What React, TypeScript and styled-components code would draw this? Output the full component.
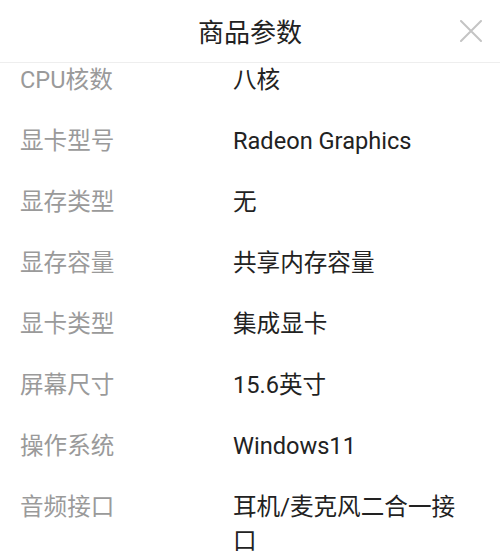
import React from "react";
import styled, { createGlobalStyle } from "styled-components";

const Global = createGlobalStyle`
  html, body { margin: 0; padding: 0; background: #fff; }
  body { font-family: "Roboto", "Noto Sans CJK SC", sans-serif; }
`;

const Sheet = styled.div`
  width: 500px;
  height: 557px;
  overflow: hidden;
  background: #fff;
  display: flex;
  flex-direction: column;
`;

const Header = styled.div`
  position: relative;
  height: 62px;
  flex-shrink: 0;
  display: flex;
  align-items: center;
  justify-content: center;
  border-bottom: 1px solid #eeeeee;
`;

const Title = styled.div`
  font-family: "Noto Sans CJK SC", sans-serif;
  font-size: 26px;
  color: #222;
  line-height: 34px;
`;

const Close = styled.button`
  position: absolute;
  right: 18px;
  top: 20px;
  width: 22px;
  height: 22px;
  padding: 0;
  border: none;
  background: none;
  display: flex;
  align-items: center;
  justify-content: center;
`;

const List = styled.div`
  display: flex;
  flex-direction: column;
  gap: 27px;
  padding: 0 20px;
`;

const Row = styled.div`
  display: grid;
  grid-template-columns: 213px 1fr;
  font-size: 23.6px;
  line-height: 34px;
  padding-right: 20px;
`;

const Label = styled.div`
  color: #9a9a9a;
`;

const Value = styled.div`
  color: #222;
  word-break: break-all;
`;

const rows: [string, string][] = [
  ["CPU核数", "八核"],
  ["显卡型号", "Radeon Graphics"],
  ["显存类型", "无"],
  ["显存容量", "共享内存容量"],
  ["显卡类型", "集成显卡"],
  ["屏幕尺寸", "15.6英寸"],
  ["操作系统", "Windows11"],
  ["音频接口", "耳机/麦克风二合一接口"],
];

export default function App() {
  return (
    <>
      <Global />
      <Sheet>
        <Header>
          <Title>商品参数</Title>
          <Close aria-label="关闭">
            <svg width="22" height="22" viewBox="0 0 22 22">
              <path d="M1 1 L21 21 M21 1 L1 21" stroke="#c4c4c4" strokeWidth="2" strokeLinecap="round" />
            </svg>
          </Close>
        </Header>
        <List>
          {rows.map(([k, v]) => (
            <Row key={k}>
              <Label>{k}</Label>
              <Value>{v}</Value>
            </Row>
          ))}
        </List>
      </Sheet>
    </>
  );
}
